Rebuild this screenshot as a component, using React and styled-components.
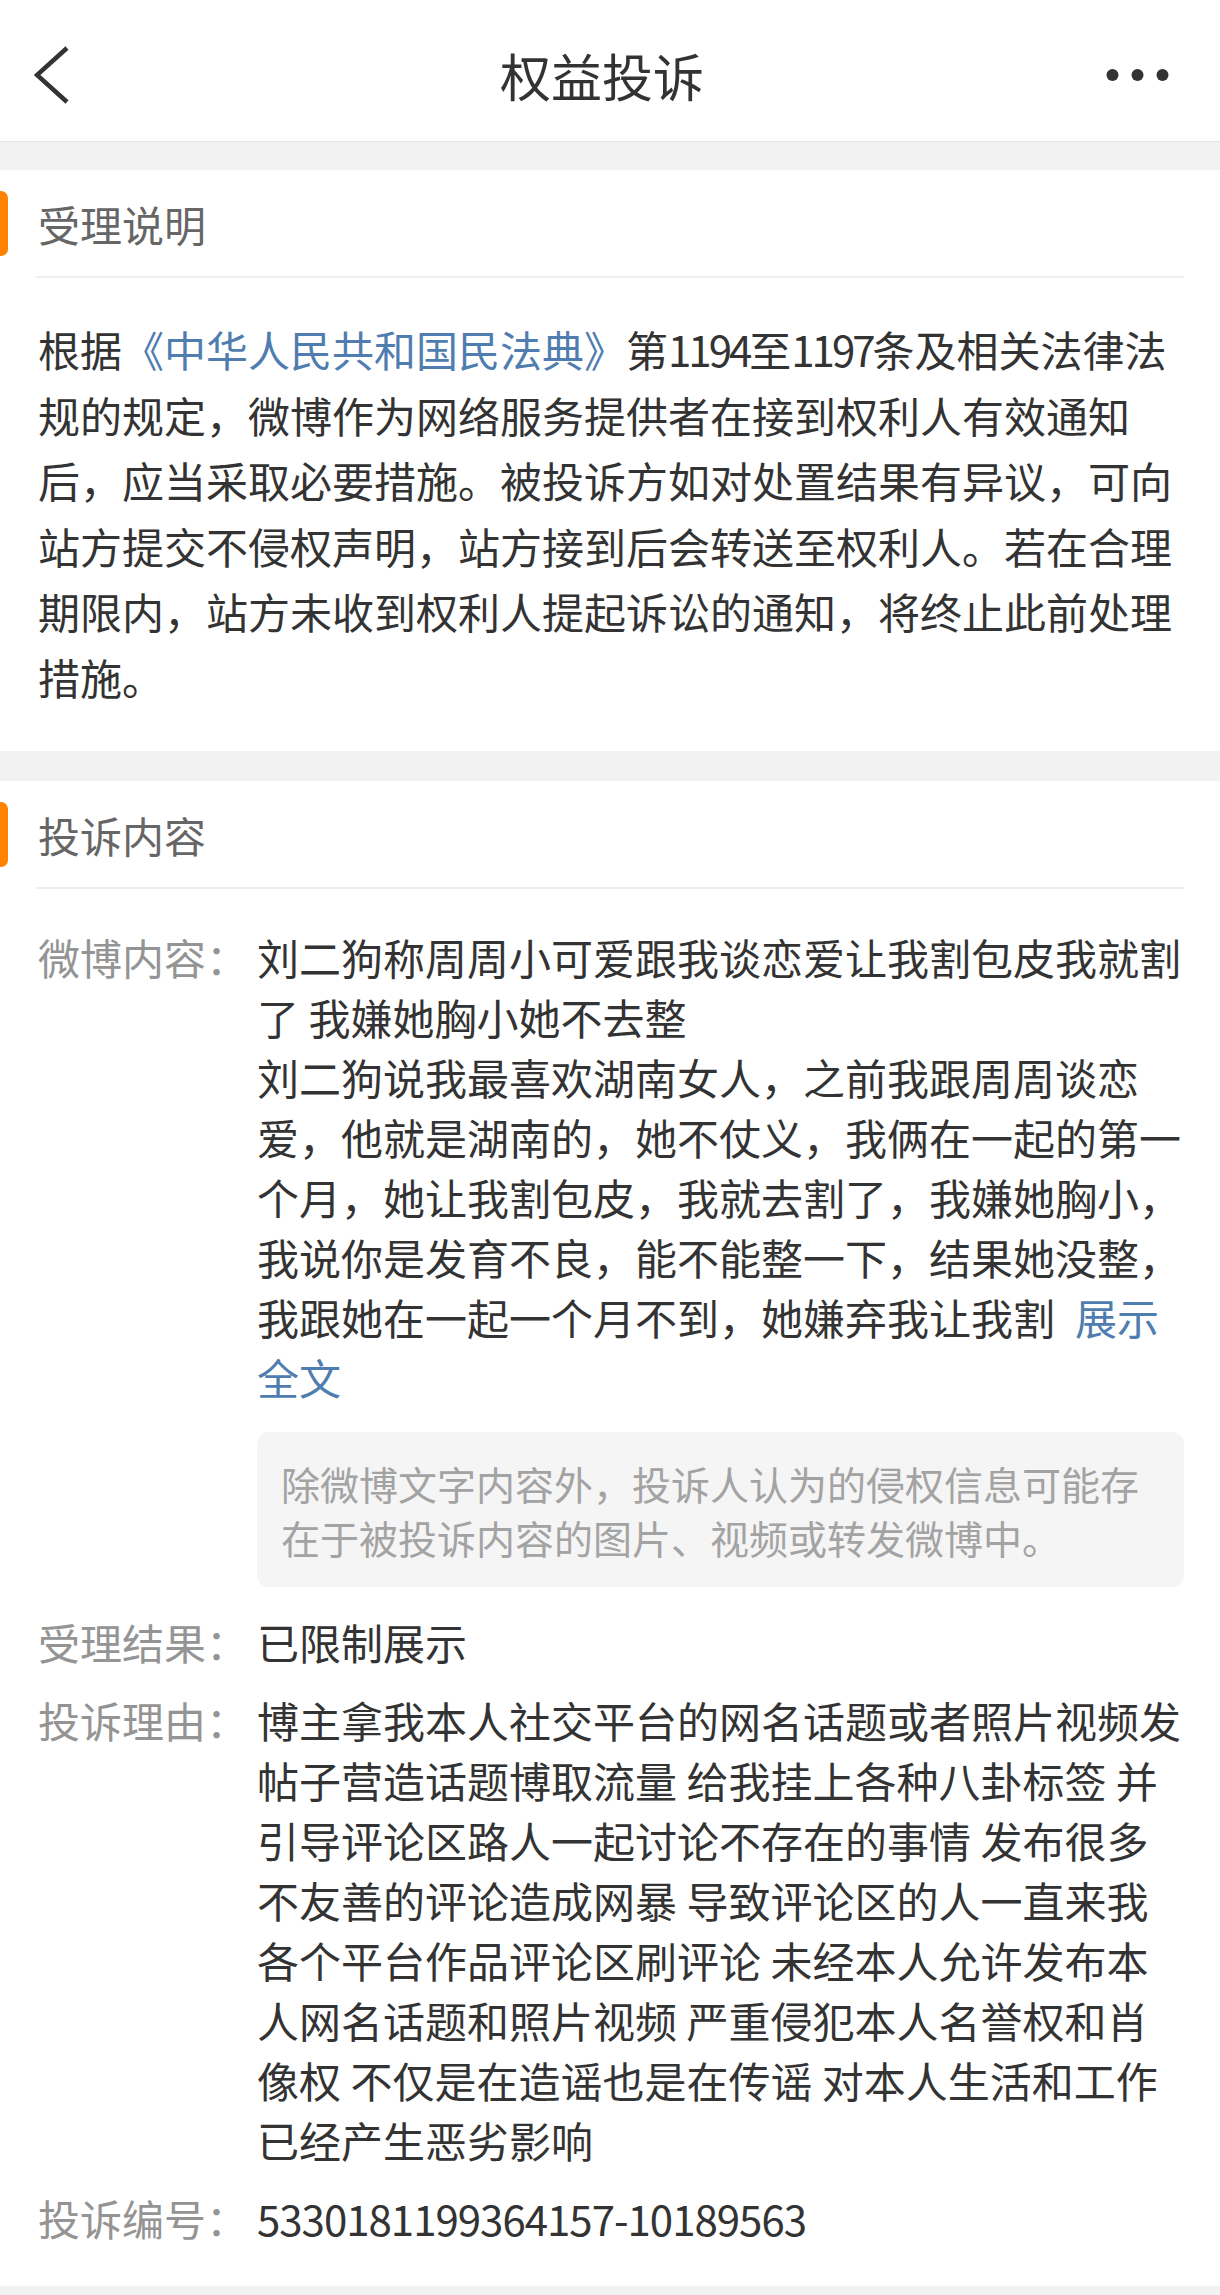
import React from 'react';
import styled, { createGlobalStyle } from 'styled-components';

const GlobalStyle = createGlobalStyle`
  html, body {
    margin: 0;
    padding: 0;
    background-color: #f2f2f2;
  }
  body {
    font-family: 'Noto Sans CJK SC', 'Noto Sans', sans-serif;
    color: #333333;
  }
  * {
    box-sizing: border-box;
  }
`;

const Header = styled.header`
  height: 142px;
  padding: 8px 50px 0 34px;
  background-color: #ffffff;
  border-bottom: 1px solid #e6e6e6;
  display: grid;
  grid-template-columns: 1fr auto 1fr;
  align-items: center;
`;

const BackButton = styled.div`
  display: flex;
  align-items: center;
  justify-self: start;
`;

const Title = styled.h1`
  margin: 0;
  font-size: 51px;
  font-weight: 400;
  color: #333333;
  letter-spacing: 0;
`;

const MoreButton = styled.div`
  display: flex;
  align-items: center;
  justify-self: end;
`;

const Section = styled.section`
  margin-top: ${(props) => props.gap}px;
  background-color: #ffffff;
`;

const SectionHead = styled.div`
  height: 106px;
  display: flex;
  align-items: center;
`;

const Bar = styled.span`
  width: 8px;
  height: 65px;
  background-color: #ff8200;
  border-radius: 0 7px 7px 0;
`;

const SectionTitle = styled.h2`
  margin: 0 0 0 30px;
  font-size: 42px;
  font-weight: 400;
  color: #666666;
`;

const Divider = styled.div`
  margin: 0 36px;
  height: 2px;
  background-color: #eeeeee;
`;

const Paragraph = styled.p`
  margin: 0;
  padding: 38px 40px 42px 38px;
  font-size: 42px;
  line-height: 65.5px;
  color: #333333;
`;

// the screenshot font has narrower figures than Noto
const Num = styled.span`
  letter-spacing: ${(props) => props.tight ? '-3px' : '-1px'};
`;

const Link = styled.span`
  color: #507daf;
  margin-left: ${(props) => props.spaced ? '20px' : '0'};
`;

const Rows = styled.div`
  padding: 38px 36px 38px 38px;
  display: flex;
  flex-direction: column;
  gap: 18px;
`;

const Row = styled.div`
  display: flex;
  align-items: flex-start;
`;

const Label = styled.div`
  flex: 0 0 219px;
  font-size: 42px;
  line-height: 60px;
  color: #949494;
`;

const Value = styled.div`
  flex: 1;
  min-width: 0;
  font-size: 42px;
  line-height: 60px;
  color: #333333;
  white-space: pre-wrap;
`;

const Notice = styled.div`
  margin: 25px 0 7px;
  padding: 24px 24px 23px;
  background-color: #f5f5f5;
  border-radius: 12px;
  font-size: 39px;
  line-height: 54px;
  color: #a3a3a3;
  white-space: normal;
`;

const BackIcon = () => (
  <svg width="36" height="60" viewBox="0 0 36 60">
    <polyline
      points="33,3 3,30 33,57"
      fill="none"
      stroke="#333333"
      strokeWidth="4.5"
    />
  </svg>
);

const MoreIcon = () => (
  <svg width="64" height="14" viewBox="0 0 64 14">
    <circle cx="6.5" cy="7" r="6" fill="#333333" />
    <circle cx="31.5" cy="7" r="6" fill="#333333" />
    <circle cx="56.5" cy="7" r="6" fill="#333333" />
  </svg>
);

const weiboText =
  '刘二狗称周周小可爱跟我谈恋爱让我割包皮我就割了 我嫌她胸小她不去整\n' +
  '刘二狗说我最喜欢湖南女人，之前我跟周周谈恋爱，他就是湖南的，她不仗义，我俩在一起的第一个月，她让我割包皮，我就去割了，我嫌她胸小，我说你是发育不良，能不能整一下，结果她没整，我跟她在一起一个月不到，她嫌弃我让我割';

const reasonText =
  '博主拿我本人社交平台的网名话题或者照片视频发帖子营造话题博取流量 给我挂上各种八卦标签 并引导评论区路人一起讨论不存在的事情 发布很多不友善的评论造成网暴 导致评论区的人一直来我各个平台作品评论区刷评论 未经本人允许发布本人网名话题和照片视频 严重侵犯本人名誉权和肖像权 不仅是在造谣也是在传谣 对本人生活和工作已经产生恶劣影响';

const App = () => {
  return (
    <>
      <GlobalStyle />
      <Header>
        <BackButton>
          <BackIcon />
        </BackButton>
        <Title>权益投诉</Title>
        <MoreButton>
          <MoreIcon />
        </MoreButton>
      </Header>

      <Section gap={28}>
        <SectionHead>
          <Bar />
          <SectionTitle>受理说明</SectionTitle>
        </SectionHead>
        <Divider />
        <Paragraph>
          根据<Link>《中华人民共和国民法典》</Link>第<Num tight>1194</Num>至<Num tight>1197</Num>条及相关法律法规的规定，微博作为网络服务提供者在接到权利人有效通知后，应当采取必要措施。被投诉方如对处置结果有异议，可向站方提交不侵权声明，站方接到后会转送至权利人。若在合理期限内，站方未收到权利人提起诉讼的通知，将终止此前处理措施。
        </Paragraph>
      </Section>

      <Section gap={30}>
        <SectionHead>
          <Bar />
          <SectionTitle>投诉内容</SectionTitle>
        </SectionHead>
        <Divider />
        <Rows>
          <Row>
            <Label>微博内容：</Label>
            <Value>
              {weiboText}
              <Link spaced>展示全文</Link>
              <Notice>
                除微博文字内容外，投诉人认为的侵权信息可能存在于被投诉内容的图片、视频或转发微博中。
              </Notice>
            </Value>
          </Row>
          <Row>
            <Label>受理结果：</Label>
            <Value>已限制展示</Value>
          </Row>
          <Row>
            <Label>投诉理由：</Label>
            <Value>{reasonText}</Value>
          </Row>
          <Row>
            <Label>投诉编号：</Label>
            <Value>
              <Num>5330181199364157-10189563</Num>
            </Value>
          </Row>
        </Rows>
      </Section>
    </>
  );
};

export default App;
